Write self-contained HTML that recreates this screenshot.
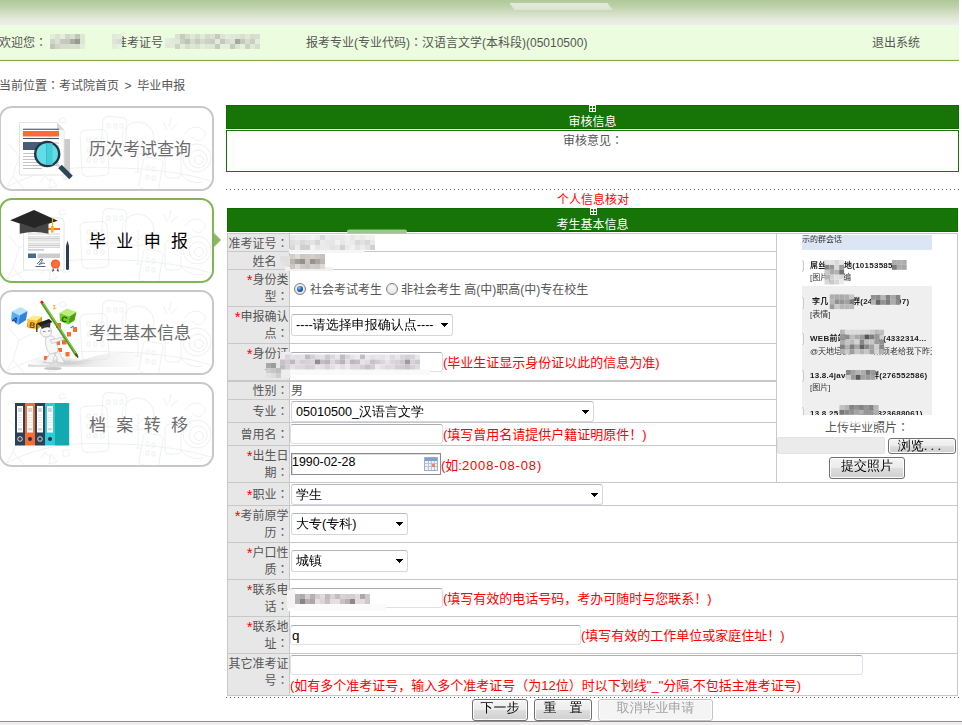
<!DOCTYPE html>
<html lang="zh-CN">
<head>
<meta charset="utf-8">
<title>毕业申报</title>
<style>
*{box-sizing:border-box;margin:0;padding:0}
html,body{width:962px;height:725px;overflow:hidden;background:#fff}
body{position:relative;font-family:"Liberation Sans","Noto Sans CJK SC","WenQuanYi Zen Hei",sans-serif;font-size:12px;color:#555;line-height:1}
.abs{position:absolute}
#banner{left:0;top:0;width:959px;height:25px;background:linear-gradient(to bottom,#b0c899 0%,#bdd1a9 25%,#cfddc1 50%,#e2e9da 76%,#eeeeed 100%)}
#streak{left:512px;top:3px;width:98px;height:7px;background:linear-gradient(to bottom,#e9ede0,#dfe6d3);transform:skewX(35deg);opacity:.9}
#info{left:0;top:25px;width:959px;height:36px;background:#ecfddf;border-bottom:1px solid #79b432;box-shadow:inset 0 -1px 0 #e0f5cf}
.t{position:absolute;white-space:nowrap;font-size:12px;line-height:14px;color:#555}
.blur{position:absolute;background:#ccc;filter:blur(1.5px);opacity:.8}
/* sidebar */
.sb{position:absolute;left:-1px;width:215px;height:85px;border:2px solid #c8c8c8;border-radius:13px;background:#fff;overflow:hidden}
.sb.on{border-color:#80b554}
.sb .lbl{position:absolute;left:88px;top:30px;font-size:17px;line-height:24px;color:#6c6c6c;white-space:nowrap}
.sb svg.doodle{position:absolute;left:0;top:0}
/* main */
.gh{position:absolute;left:226px;width:733px;height:24px;background:#177407;border:1px solid #0f6a03;color:#fff;text-align:center}
.gh .tt{position:absolute;left:0;right:0;top:9px;font-size:12px;line-height:14px}
.gh .ic{position:absolute;left:362px;top:-1px;width:7px;height:7px;border:1px solid #fff}
.gh .ic:before{content:"";position:absolute;left:2px;top:0;width:1px;height:5px;background:#fff}
.gh .ic:after{content:"";position:absolute;left:0;top:2px;width:5px;height:1px;background:#fff}
.dots{position:absolute;left:226px;width:733px;height:1px;background:repeating-linear-gradient(to right,#5c5c5c 0,#5c5c5c 1px,transparent 1px,transparent 4px)}
#tbl{position:absolute;left:227px;top:232px;width:731px;height:464px;border:1px solid #ccc;background:#fff}
.row{position:absolute;left:0;width:729px;border-top:1px solid #ccc}
.lab{position:absolute;left:0;top:0;bottom:0;width:62px;background:#efefef;border-right:1px solid #ccc;text-align:right;color:#555;font-size:12px;line-height:18px;padding-right:0}
.lab i{font-style:normal;color:#f00}
.red{color:#f00}
.lb{position:absolute;left:228px;width:60.5px;text-align:right;font-size:12px;line-height:17px;color:#555;white-space:nowrap}
.lb i{font-style:normal;color:#f00;font-size:15px;line-height:0;position:relative;top:1px}
.inp{position:absolute;background:#fff;border:1px solid #dde2ea;border-top-color:#abadb3;border-radius:3px;font-size:12px;color:#000}
.sel{position:absolute;background:#fff;border:1px solid #d3d7e0;border-top-color:#b4b7bd;border-radius:3px;font-size:13px;color:#000;white-space:nowrap;line-height:19px;padding-left:4px;font-family:"Liberation Sans","WenQuanYi Zen Hei","Noto Sans CJK SC",sans-serif}
.sel:after{content:"";position:absolute;right:4px;top:8px;width:7px;height:4px;background:linear-gradient(#000,#000) 0 0/7px 1px no-repeat,linear-gradient(#000,#000) 1px 1px/5px 1px no-repeat,linear-gradient(#000,#000) 2px 2px/3px 1px no-repeat,linear-gradient(#000,#000) 3px 3px/1px 1px no-repeat}
.sel b{font-weight:normal;font-size:12.6px}
.btn{position:absolute;border:1px solid #707070;border-radius:3px;background:linear-gradient(to bottom,#f4f4f4 0%,#ececec 48%,#dddddd 52%,#d0d0d0 100%);box-shadow:inset 0 0 0 1px #fcfcfc;color:#000;text-align:center;font-size:13px;white-space:nowrap;font-family:"Liberation Sans","WenQuanYi Zen Hei","Noto Sans CJK SC",sans-serif}

.radio{position:absolute;width:12px;height:12px;border-radius:50%;border:1px solid #808080;background:radial-gradient(circle at 50% 40%,#fdfdfd 0%,#e8e8e8 60%,#d4d4d4 100%)}
.radio.on:after{content:"";position:absolute;left:2px;top:2px;width:6px;height:6px;border-radius:50%;background:radial-gradient(circle at 38% 32%,#8fd0fa 0,#1b69b6 45%,#0a2f68 100%)}
.inp.dk{border:1px solid #8a8a8a;border-radius:0;box-shadow:inset 1px 1px 0 #ddd}
.btn.dis{color:#a2a2a2;border-color:#c2c4c6;background:#f4f4f4}

#photo .pt{position:absolute;white-space:pre;font-size:8px;line-height:10px;font-family:"Liberation Sans","Noto Sans CJK SC","WenQuanYi Zen Hei",sans-serif;filter:blur(.3px)}
#photo i{position:absolute;display:block;filter:blur(.6px)}
#mz i{position:absolute;display:block;filter:blur(.7px)}
</style>
</head>
<body>
<div id="banner" class="abs"></div>
<div id="streak" class="abs"></div>
<div id="info" class="abs"></div>
<div class="t" style="left:-1px;top:36px">欢迎您<span lang="zh-TW">：</span></div>
<div class="t" style="left:115px;top:36px">准考证号<span lang="zh-TW">：</span></div>
<div class="t" style="left:306px;top:36px">报考专业(专业代码)<span lang="zh-TW">：</span>汉语言文学(本科段)(05010500)</div>
<div class="t" style="left:872px;top:36px">退出系统</div>
<div class="t" style="left:-1px;top:79px">当前位置<span lang="zh-TW">：</span>考试院首页<span style="word-spacing:1.5px;letter-spacing:.5px"> &gt; </span>毕业申报</div>

<!-- SIDEBAR -->
<div class="sb" style="top:106px"><svg class="doodle" width="211" height="81" viewBox="0 0 211 81"><g fill="none" stroke="#eef0f2" stroke-width="1">
<rect x="80" y="22" width="27" height="46" rx="5" transform="rotate(-3 93 45)"/><rect x="101" y="9" width="24" height="34" rx="5" transform="rotate(4 113 26)"/>
<circle cx="137" cy="30" r="16"/><path d="M137 30v34M137 44l-7 -8M137 40l7 -7M134 64h7"/>
<rect x="140" y="50" width="20" height="32" rx="4" transform="rotate(10 150 66)"/><rect x="164" y="40" width="16" height="30" rx="4"/>
<path d="M4 80C40 60,80 58,110 60C150 60,190 66,212 74"/>
<path d="M8 36l10 12l-6 20M18 48l12 -6M12 68l-8 14M12 68l12 14M22 30c4 -4,8 -2,7 2s-6 4,-7 -2z"/>
<circle cx="196" cy="50" r="14"/><circle cx="197" cy="51" r="9"/><circle cx="198" cy="52" r="4.500"/><path d="M184 26c4 -10,20 -8,20 0s-10 8,-13 3M180 66c4 6,12 10,22 8"/>
<path d="M86 30h3v4h-3zM93 30h3v4h-3zM100 30h3v4h-3zM86 40h3v4h-3zM93 40h3v4h-3zM100 40h3v4h-3zM86 50h3v4h-3zM93 50h3v4h-3zM100 50h3v4h-3zM106 16h3v4h-3zM113 16h3v4h-3zM119 16h3v4h-3zM145 58h3v4h-3zM151 59h3v4h-3zM145 67h3v4h-3zM151 68h3v4h-3z"/>
<path d="M50 70l6 8l-8 2zM62 66h6v6h-6zM40 74l4 -6l5 5"/><path d="M58 12c3 -4,8 -2,7 2l-6 1zM162 14l4 8M170 10l-2 9M176 16l-6 6"/>
</g></svg><div class="lbl" style="">历次考试查询</div></div>
<svg class="abs" style="left:0;top:106px" width="120" height="85" viewBox="0 106 120 85"><rect x="62" y="139" width="8" height="33" fill="#cbcbcb"/>
<path d="M19.5 122.5H57L64 130V175H19.5Z" fill="#fff" stroke="#e4e4e4" stroke-width="1"/>
<path d="M57 122.5L64 130H57Z" fill="#dadada"/>
<rect x="23" y="128.7" width="36" height="1.1" fill="#41566b"/>
<rect x="23" y="131" width="36" height="5.5" fill="#ff6b35"/>
<rect x="23" y="138" width="36" height="1" fill="#41566b"/>
<rect x="23" y="142" width="18" height="8" fill="#4b5d74"/>
<path d="M43 143h16M43 146h16M43 149h16M23 153.500h36M23 156.500h36M23 159.500h36M23 162.500h36M23 165.500h36M23 168.500h19" stroke="#c4c4c4" stroke-width="1.2"/>
<path d="M56 163L60 167" stroke="#d0d0d0" stroke-width="2"/>
<path d="M60 166.500L71 177.500" stroke="#2e4459" stroke-width="5" stroke-linecap="butt"/>
<circle cx="47.200" cy="154" r="12" fill="#62dde6" stroke="#263447" stroke-width="2.400"/>
<rect x="46.500" y="143.200" width="6" height="21.600" fill="#45cdd8"/>
<rect x="46" y="143" width="0.8" height="22" fill="#2fb9c6"/></svg>
<div class="sb on" style="top:198px"><svg class="doodle" width="211" height="81" viewBox="0 0 211 81"><g fill="none" stroke="#eef0f2" stroke-width="1">
<rect x="80" y="22" width="27" height="46" rx="5" transform="rotate(-3 93 45)"/><rect x="101" y="9" width="24" height="34" rx="5" transform="rotate(4 113 26)"/>
<circle cx="137" cy="30" r="16"/><path d="M137 30v34M137 44l-7 -8M137 40l7 -7M134 64h7"/>
<rect x="140" y="50" width="20" height="32" rx="4" transform="rotate(10 150 66)"/><rect x="164" y="40" width="16" height="30" rx="4"/>
<path d="M4 80C40 60,80 58,110 60C150 60,190 66,212 74"/>
<path d="M8 36l10 12l-6 20M18 48l12 -6M12 68l-8 14M12 68l12 14M22 30c4 -4,8 -2,7 2s-6 4,-7 -2z"/>
<circle cx="196" cy="50" r="14"/><circle cx="197" cy="51" r="9"/><circle cx="198" cy="52" r="4.500"/><path d="M184 26c4 -10,20 -8,20 0s-10 8,-13 3M180 66c4 6,12 10,22 8"/>
<path d="M86 30h3v4h-3zM93 30h3v4h-3zM100 30h3v4h-3zM86 40h3v4h-3zM93 40h3v4h-3zM100 40h3v4h-3zM86 50h3v4h-3zM93 50h3v4h-3zM100 50h3v4h-3zM106 16h3v4h-3zM113 16h3v4h-3zM119 16h3v4h-3zM145 58h3v4h-3zM151 59h3v4h-3zM145 67h3v4h-3zM151 68h3v4h-3z"/>
<path d="M50 70l6 8l-8 2zM62 66h6v6h-6zM40 74l4 -6l5 5"/><path d="M58 12c3 -4,8 -2,7 2l-6 1zM162 14l4 8M170 10l-2 9M176 16l-6 6"/>
</g></svg><div class="lbl" style="color:#000;letter-spacing:2.8px">毕 业 申 报</div></div>
<svg class="abs" style="left:0;top:198px" width="120" height="85" viewBox="0 198 120 85"><path d="M23.500 218H60Q64 218 64 222V270H23.500Z" fill="#fff" stroke="#e6e6e6" stroke-width="1"/>
<rect x="48" y="228" width="12" height="2" fill="#ff6b35"/>
<path d="M28 234h32M28 236.800h32M28 240.800h32M28 243.200h32M28 247.400h32" stroke="#d4d4d4" stroke-width="1"/>
<path d="M28 238.700h32M28 245.300h32" stroke="#cfcfcf" stroke-width="1.800"/>
<path d="M28 249.800h16" stroke="#cfcfcf" stroke-width="1.800"/>
<rect x="28" y="253.500" width="8" height="4.500" fill="#4b6a88"/>
<rect x="37.500" y="253.500" width="22.500" height="4.500" fill="#cdcdcd"/>
<path d="M37 264l3 -3l1 -2l1.500 .5l-1 2.500l-2.500 2.500l4 -1.500l2 .5M35.500 266.500h10" stroke="#54697f" stroke-width="1" fill="none"/>
<path d="M53 267l-.8 5l2 -1.200zM58 267l.8 5l-2 -1.200z" fill="#35506b"/>
<circle cx="55.500" cy="264" r="4.600" fill="#ff5a26"/>
<circle cx="55.500" cy="264" r="3" fill="#ff7240"/>
<path d="M67.500 240.500L69 246V268.500Q69 270 67.500 270Q66 270 66 268.500V246Z" fill="#2b3d50"/>
<path d="M10.200 220.300L34 210L57.800 220.800L34 228.500Z" fill="#262626"/>
<path d="M19.700 223L34 228L48.500 223V233.800Q34 230 19.700 233.800Z" fill="#454545"/>

<path d="M52.500 218V228" stroke="#f5b400" stroke-width="1.200"/>
<path d="M52.300 226V232.500" stroke="#f9b700" stroke-width="2.600"/></svg>
<div class="sb" style="top:290px"><svg class="doodle" width="211" height="81" viewBox="0 0 211 81"><g fill="none" stroke="#eef0f2" stroke-width="1">
<rect x="80" y="22" width="27" height="46" rx="5" transform="rotate(-3 93 45)"/><rect x="101" y="9" width="24" height="34" rx="5" transform="rotate(4 113 26)"/>
<circle cx="137" cy="30" r="16"/><path d="M137 30v34M137 44l-7 -8M137 40l7 -7M134 64h7"/>
<rect x="140" y="50" width="20" height="32" rx="4" transform="rotate(10 150 66)"/><rect x="164" y="40" width="16" height="30" rx="4"/>
<path d="M4 80C40 60,80 58,110 60C150 60,190 66,212 74"/>
<path d="M8 36l10 12l-6 20M18 48l12 -6M12 68l-8 14M12 68l12 14M22 30c4 -4,8 -2,7 2s-6 4,-7 -2z"/>
<circle cx="196" cy="50" r="14"/><circle cx="197" cy="51" r="9"/><circle cx="198" cy="52" r="4.500"/><path d="M184 26c4 -10,20 -8,20 0s-10 8,-13 3M180 66c4 6,12 10,22 8"/>
<path d="M86 30h3v4h-3zM93 30h3v4h-3zM100 30h3v4h-3zM86 40h3v4h-3zM93 40h3v4h-3zM100 40h3v4h-3zM86 50h3v4h-3zM93 50h3v4h-3zM100 50h3v4h-3zM106 16h3v4h-3zM113 16h3v4h-3zM119 16h3v4h-3zM145 58h3v4h-3zM151 59h3v4h-3zM145 67h3v4h-3zM151 68h3v4h-3z"/>
<path d="M50 70l6 8l-8 2zM62 66h6v6h-6zM40 74l4 -6l5 5"/><path d="M58 12c3 -4,8 -2,7 2l-6 1zM162 14l4 8M170 10l-2 9M176 16l-6 6"/>
</g></svg><div class="lbl" style="">考生基本信息</div></div>
<svg class="abs" style="left:0;top:290px" width="160" height="83" viewBox="0 290 160 83"><defs><linearGradient id="sw" x1="0" y1="0" x2="1" y2="0"><stop offset="0" stop-color="#cfcfcf" stop-opacity=".7"/><stop offset=".45" stop-color="#d8d8d8" stop-opacity=".6"/><stop offset="1" stop-color="#e8e8e8" stop-opacity="0"/></linearGradient><radialGradient id="sh" cx="50%" cy="50%" r="50%"><stop offset="0" stop-color="#9a9a9a" stop-opacity=".55"/><stop offset="1" stop-color="#bbb" stop-opacity="0"/></radialGradient></defs>
<path d="M28 364C50 367,76 363,92 357C106 352,125 351,150 352V367H28Z" fill="url(#sw)"/>
<ellipse cx="62" cy="362" rx="34" ry="5" fill="url(#sh)"/>
<ellipse cx="53" cy="368.500" rx="9" ry="1.600" fill="#c8c8c8"/>
<g fill="#ff6a2e"><rect x="56" y="323" width="5" height="5"/><rect x="73" y="327" width="4" height="5"/><rect x="67" y="332" width="4" height="4.500"/><rect x="62" y="340" width="4.500" height="4.500"/><rect x="56" y="341" width="4" height="4"/><rect x="58" y="348" width="4" height="4"/><rect x="65.500" y="352" width="4" height="4.500"/><rect x="44" y="356" width="3.500" height="4"/><rect x="27" y="323" width="3" height="4"/></g>
<path d="M12 311.500L20.500 307L27.500 311L19.500 315.500Z" fill="#b4e1fc"/><path d="M12 311.500L19.500 315.500L18.500 325L11 319.500Z" fill="#58aff0"/><path d="M19.500 315.500L27.500 311L26 320L18.500 325Z" fill="#2f86d6"/>
<text x="12.500" y="322.500" font-family="Liberation Sans,sans-serif" font-weight="700" font-size="8" fill="#14308c" transform="rotate(28 15 319)">A</text>
<path d="M27 319L33 315.500L42 316.500L37 320.500Z" fill="#fdeb93"/><path d="M27 319L37 320.500L37 329.500L28 328Z" fill="#f6c33c"/><path d="M37 320.500L42 316.500L42 326L37 329.500Z" fill="#e0a21e"/>
<text x="29.500" y="328" font-family="Liberation Sans,sans-serif" font-weight="700" font-size="8" fill="#7c3f0c" transform="rotate(8 32 325)">B</text>
<path d="M59.500 313L67 308.500L76.500 312L69.500 316.500Z" fill="#baf076"/><path d="M59.500 313L69.500 316.500L68 324.500L60 321Z" fill="#72cc2c"/><path d="M69.500 316.500L76.500 312L74.500 320.500L68 324.500Z" fill="#4da012"/>
<text x="61.500" y="322" font-family="Liberation Sans,sans-serif" font-weight="700" font-size="8" fill="#174f06" transform="rotate(18 64 319)">C</text>
<text x="52.500" y="309" font-family="Liberation Sans,sans-serif" font-weight="700" font-size="6" fill="#f5a623" transform="rotate(-15 55 306)">2</text>
<path d="M70.500 328l3 -2" stroke="#3f86e0" stroke-width="1.500"/>
<path d="M50 352C48 358,46 360,44 362.500L53 363C53 358,55 356,56 353ZM53 352C56 356,58 358,57 362.500L65 363C62 358,60 354,58 350Z" fill="#f4f4f4" stroke="#c2c2c2" stroke-width=".7"/>
<path d="M46.500 336C44 342,46 350,50 354L58 352C58 346,56 340,53 336Z" fill="#f7f7f7" stroke="#c2c2c2" stroke-width=".7"/>
<path d="M50 340L63 337L64 339.500L52 343.500Z" fill="#f4f4f4" stroke="#c2c2c2" stroke-width=".7"/>
<circle cx="46" cy="331.500" r="5.600" fill="#f6f6f6" stroke="#bcbcbc" stroke-width=".8"/>
<path d="M43 331.500h2.500M48 331h2.500" stroke="#8a8a8a" stroke-width="1"/>
<path d="M36.500 323.500L49 319L52.500 322L41 326.500Z" fill="#1e1e1e"/><path d="M40.500 326L50.500 322.500L50 327.500Q45 326.500 42 329Z" fill="#333"/>
<path d="M36.800 324V332" stroke="#222" stroke-width="1.200"/>
<path d="M42 302.500L77 356" stroke="#4f9a1a" stroke-width="3"/><path d="M42.500 302.200L77.500 355.700" stroke="#8fd548" stroke-width="1"/>
<circle cx="41.800" cy="302.200" r="1.400" fill="#e02020"/>
<path d="M75.500 353.500L78 357.500" stroke="#5a3a1a" stroke-width="1.500"/></svg>
<div class="sb" style="top:382px"><svg class="doodle" width="211" height="81" viewBox="0 0 211 81"><g fill="none" stroke="#eef0f2" stroke-width="1">
<rect x="80" y="22" width="27" height="46" rx="5" transform="rotate(-3 93 45)"/><rect x="101" y="9" width="24" height="34" rx="5" transform="rotate(4 113 26)"/>
<circle cx="137" cy="30" r="16"/><path d="M137 30v34M137 44l-7 -8M137 40l7 -7M134 64h7"/>
<rect x="140" y="50" width="20" height="32" rx="4" transform="rotate(10 150 66)"/><rect x="164" y="40" width="16" height="30" rx="4"/>
<path d="M4 80C40 60,80 58,110 60C150 60,190 66,212 74"/>
<path d="M8 36l10 12l-6 20M18 48l12 -6M12 68l-8 14M12 68l12 14M22 30c4 -4,8 -2,7 2s-6 4,-7 -2z"/>
<circle cx="196" cy="50" r="14"/><circle cx="197" cy="51" r="9"/><circle cx="198" cy="52" r="4.500"/><path d="M184 26c4 -10,20 -8,20 0s-10 8,-13 3M180 66c4 6,12 10,22 8"/>
<path d="M86 30h3v4h-3zM93 30h3v4h-3zM100 30h3v4h-3zM86 40h3v4h-3zM93 40h3v4h-3zM100 40h3v4h-3zM86 50h3v4h-3zM93 50h3v4h-3zM100 50h3v4h-3zM106 16h3v4h-3zM113 16h3v4h-3zM119 16h3v4h-3zM145 58h3v4h-3zM151 59h3v4h-3zM145 67h3v4h-3zM151 68h3v4h-3z"/>
<path d="M50 70l6 8l-8 2zM62 66h6v6h-6zM40 74l4 -6l5 5"/><path d="M58 12c3 -4,8 -2,7 2l-6 1zM162 14l4 8M170 10l-2 9M176 16l-6 6"/>
</g></svg><div class="lbl" style="letter-spacing:2.8px">档 案 转 移</div></div>
<svg class="abs" style="left:0;top:382px" width="120" height="85" viewBox="0 382 120 85"><rect x="15" y="403" width="10" height="42.500" fill="#2b4156"/><rect x="25" y="403" width="10" height="42.500" fill="#f76b35"/><rect x="35" y="403" width="10" height="42.500" fill="#2b4156"/><rect x="45" y="403" width="10" height="42.500" fill="#2dcbd6"/><rect x="55" y="403" width="14.200" height="42.500" fill="#12a9b0"/>
<g fill="#fff"><rect x="17" y="406" width="6" height="26.500"/><rect x="27" y="406" width="6" height="26.500"/><rect x="37" y="406" width="6" height="26.500"/><rect x="47" y="406" width="6" height="26.500"/></g>
<g fill="#d4d4d4"><rect x="18" y="408" width="4" height="4"/><rect x="28" y="408" width="4" height="4"/><rect x="38" y="408" width="4" height="4"/><rect x="48" y="408" width="4" height="4"/><rect x="18" y="428" width="4" height="2.500"/><rect x="28" y="428" width="4" height="2.500"/><rect x="38" y="428" width="4" height="2.500"/><rect x="48" y="428" width="4" height="2.500"/></g>
<path d="M18 415h4M18 417.500h4M18 420h4M18 422.500h4M18 425h4M28 415h4M28 417.500h4M28 420h4M28 422.500h4M28 425h4M38 415h4M38 417.500h4M38 420h4M38 422.500h4M38 425h4M48 415h4M48 417.500h4M48 420h4M48 422.500h4M48 425h4" stroke="#e2e2e2" stroke-width="1"/>
<circle cx="20" cy="439" r="2.300" fill="#2b4156" stroke="#fff" stroke-width=".8"/><circle cx="30" cy="439" r="2" fill="#1f3247"/><circle cx="40" cy="439" r="2.300" fill="#2b4156" stroke="#fff" stroke-width=".8"/><circle cx="50" cy="439" r="2" fill="#1f3247"/></svg>
<div class="abs" style="left:214px;top:233px;width:0;height:0;border:7px solid transparent;border-left:7px solid #8cb866;border-right:0"></div>

<!-- MAIN -->
<div class="gh" style="top:105px"><span class="ic"></span><div class="tt">审核信息</div></div>
<div class="abs" style="left:226px;top:130px;width:733px;height:42px;border:1px solid #187208;background:#fff"></div>
<div class="t" style="left:563px;top:134px">审核意见<span lang="zh-TW">：</span></div>
<div class="dots" style="top:189px"></div>
<div class="t red" style="left:557px;top:193px">个人信息核对</div>
<div class="gh" style="top:208px;left:227px;width:731px"><span class="ic"></span><div class="tt">考生基本信息</div></div>

<div class="abs" style="left:227px;top:233px;width:63px;height:463px;background:#e7e7e7;border-left:1px solid #c8c8c8;border-right:1px solid #c8c8c8"></div>
<div class="abs" style="left:957px;top:233px;width:1px;height:463px;background:#c8c8c8"></div>
<div class="abs" style="left:776px;top:233px;width:1px;height:249px;background:#c8c8c8"></div>
<div class="abs" style="left:227px;top:233px;width:731px;height:1px;background:#c8c8c8"></div>
<div class="abs" style="left:227px;top:251px;width:550px;height:1px;background:#c8c8c8"></div>
<div class="abs" style="left:227px;top:269px;width:550px;height:1px;background:#c8c8c8"></div>
<div class="abs" style="left:227px;top:306px;width:550px;height:1px;background:#c8c8c8"></div>
<div class="abs" style="left:227px;top:343px;width:550px;height:1px;background:#c8c8c8"></div>
<div class="abs" style="left:227px;top:380px;width:550px;height:2px;background:#c8c8c8"></div>
<div class="abs" style="left:227px;top:399px;width:550px;height:1px;background:#c8c8c8"></div>
<div class="abs" style="left:227px;top:422px;width:550px;height:1px;background:#c8c8c8"></div>
<div class="abs" style="left:227px;top:445px;width:550px;height:1px;background:#c8c8c8"></div>
<div class="abs" style="left:227px;top:482px;width:731px;height:1px;background:#c8c8c8"></div>
<div class="abs" style="left:227px;top:505px;width:731px;height:1px;background:#c8c8c8"></div>
<div class="abs" style="left:227px;top:542px;width:731px;height:1px;background:#c8c8c8"></div>
<div class="abs" style="left:227px;top:579px;width:731px;height:1px;background:#c8c8c8"></div>
<div class="abs" style="left:227px;top:616px;width:731px;height:1px;background:#c8c8c8"></div>
<div class="abs" style="left:227px;top:653px;width:731px;height:1px;background:#c8c8c8"></div>
<div class="abs" style="left:227px;top:695px;width:731px;height:1px;background:#c8c8c8"></div>
<div class="lb" style="top:236px">准考证号<span lang="zh-TW">：</span></div>
<div class="lb" style="top:254px">姓名<span lang="zh-TW">：</span></div>
<div class="lb" style="top:272px"><i>*</i>身份类<br>型<span lang="zh-TW">：</span></div>
<div class="lb" style="top:309px"><i>*</i>申报确认<br>点<span lang="zh-TW">：</span></div>
<div class="lb" style="top:346px"><i>*</i>身份证<br>号<span lang="zh-TW">：</span></div>
<div class="lb" style="top:383px">性别<span lang="zh-TW">：</span></div>
<div class="lb" style="top:404px">专业<span lang="zh-TW">：</span></div>
<div class="lb" style="top:427px">曾用名<span lang="zh-TW">：</span></div>
<div class="lb" style="top:448px"><i>*</i>出生日<br>期<span lang="zh-TW">：</span></div>
<div class="lb" style="top:487px"><i>*</i>职业<span lang="zh-TW">：</span></div>
<div class="lb" style="top:508px"><i>*</i>考前原学<br>历<span lang="zh-TW">：</span></div>
<div class="lb" style="top:545px"><i>*</i>户口性<br>质<span lang="zh-TW">：</span></div>
<div class="lb" style="top:582px"><i>*</i>联系电<br>话<span lang="zh-TW">：</span></div>
<div class="lb" style="top:619px"><i>*</i>联系地<br>址<span lang="zh-TW">：</span></div>
<div class="lb" style="top:656px">其它准考证<br>号<span lang="zh-TW">：</span></div>

<!-- values -->
<div class="t" style="left:291px;top:383px;line-height:16px">男</div>
<!-- radios -->
<div class="radio on" style="left:294px;top:283px"></div>
<div class="t" style="left:310px;top:283px">社会考试考生</div>
<div class="radio" style="left:386px;top:283px"></div>
<div class="t" style="left:401px;top:283px">非社会考生 高(中)职高(中)专在校生</div>
<!-- selects / inputs -->
<div class="sel" style="left:291px;top:314px;width:162px;height:22px"><b>----</b>请选择申报确认点<b>----</b></div>
<div class="inp" style="left:290px;top:352px;width:153px;height:20px"></div>
<div class="t red" style="left:443px;top:355px;font-size:13px;line-height:16px">(毕业生证显示身份证以此的信息为准)</div>
<div class="sel" style="left:291px;top:401px;width:303px;height:21px"><b>05010500_</b>汉语言文学</div>
<div class="inp" style="left:290px;top:424px;width:153px;height:20px"></div>
<div class="t red" style="left:443px;top:427px;font-size:13px;line-height:16px">(填写曾用名请提供户籍证明原件！)</div>
<div class="inp dk" style="left:291px;top:453px;width:150px;height:22px"><span style="position:absolute;left:0;top:1px;font-size:12.4px;line-height:15px;color:#000;font-family:'Liberation Sans',sans-serif">1990-02-28</span>
<svg style="position:absolute;left:132px;top:3px" width="14" height="14" viewBox="0 0 14 14"><rect x="0.5" y="0.5" width="13" height="13" fill="#eef2f8" stroke="#9fb0c8"/><rect x="1" y="1" width="12" height="3" fill="#7f9fd0"/><path d="M1 6.5h12M1 9.5h12M4.5 4v9M7.5 4v9M10.5 4v9" stroke="#b7c3d6" stroke-width="1"/><rect x="8" y="7" width="3" height="3" fill="#e8866a"/></svg></div>
<div class="t red" style="left:441px;top:458px;font-size:13px;line-height:16px">(如:<span style="letter-spacing:.85px">2008-08-08</span>)</div>
<div class="sel" style="left:291px;top:484px;width:312px;height:21px">学生</div>
<div class="sel" style="left:291px;top:513px;width:117px;height:22px">大专<b>(</b>专科<b>)</b></div>
<div class="sel" style="left:291px;top:550px;width:117px;height:22px">城镇</div>
<div class="inp" style="left:290px;top:588px;width:153px;height:20px"></div>
<div class="t red" style="left:443px;top:591px;font-size:13px;line-height:16px">(填写有效的电话号码，考办可随时与您联系！)</div>
<div class="inp" style="left:290px;top:625px;width:291px;height:20px"><span style="position:absolute;left:1px;top:2px;font-size:13.33px;line-height:15px;color:#000;font-family:'Liberation Sans',sans-serif">q</span></div>
<div class="t red" style="left:581px;top:628px;font-size:13px;line-height:16px">(填写有效的工作单位或家庭住址！)</div>
<div class="inp" style="left:290px;top:655px;width:573px;height:20px"></div>
<div class="t red" style="left:290px;top:678px;font-size:13px;line-height:16px">(如有多个准考证号，输入多个准考证号（为12位）时以下划线"_"分隔,不包括主准考证号)</div>
<!-- photo cell -->
<div class="abs" id="photo" style="left:802px;top:235px;width:130px;height:180px;background:#efefef;overflow:hidden"><div style="position:absolute;left:0;top:0;width:130px;height:15px;background:#dbe5f3"></div><div style="position:absolute;left:0;top:15px;width:130px;height:36px;background:#fff"></div><span class="pt" style="left:0px;top:0px;color:#333">示的群会话</span><span class="pt" style="left:8px;top:25.5px;font-weight:bold;letter-spacing:.25px;color:#1a1a1a">屌丝</span><span class="pt" style="left:42px;top:25.5px;font-weight:bold;letter-spacing:.25px;color:#1a1a1a">地(10153585</span><span class="pt" style="left:8px;top:37.5px;color:#333">[图片]</span><span class="pt" style="left:41px;top:37.5px;color:#333">编</span><span class="pt" style="left:10px;top:62px;font-weight:bold;letter-spacing:.25px;color:#1a1a1a">李几</span><span class="pt" style="left:50px;top:62px;font-weight:bold;letter-spacing:.25px;color:#1a1a1a">群(24</span><span class="pt" style="left:95px;top:62px;font-weight:bold;letter-spacing:.25px;color:#1a1a1a">97)</span><span class="pt" style="left:8px;top:74.5px;color:#333">[表情]</span><span class="pt" style="left:8px;top:99px;font-weight:bold;letter-spacing:.25px;color:#1a1a1a">WEB前端</span><span class="pt" style="left:73px;top:99px;font-weight:bold;letter-spacing:.25px;color:#1a1a1a">班(4332314...</span><span class="pt" style="left:8px;top:111.5px;color:#333">@天地培训</span><span class="pt" style="left:72px;top:111.5px;color:#333">麻烦老给我下昨天</span><span class="pt" style="left:8px;top:136px;font-weight:bold;letter-spacing:.25px;color:#1a1a1a">13.8.4java</span><span class="pt" style="left:69px;top:136px;font-weight:bold;letter-spacing:.25px;color:#1a1a1a">群(276552586)</span><span class="pt" style="left:8px;top:148px;color:#333">[图片]</span><span class="pt" style="left:8px;top:173.5px;font-weight:bold;letter-spacing:.25px;color:#1a1a1a">13.8.25</span><span class="pt" style="left:56px;top:173.5px;font-weight:bold;letter-spacing:.25px;color:#1a1a1a">业班(323688061)</span><div style="position:absolute;left:-4px;top:25px;width:6px;height:12px;border:1px solid #ccc;border-radius:2px;background:#f8f8f8"></div><div style="position:absolute;left:-4px;top:62px;width:6px;height:12px;border:1px solid #ccc;border-radius:2px;background:#f8f8f8"></div><div style="position:absolute;left:-4px;top:98px;width:6px;height:12px;border:1px solid #ccc;border-radius:2px;background:#f8f8f8"></div><div style="position:absolute;left:-4px;top:135px;width:6px;height:12px;border:1px solid #ccc;border-radius:2px;background:#f8f8f8"></div><div style="position:absolute;left:-4px;top:172px;width:6px;height:12px;border:1px solid #ccc;border-radius:2px;background:#f8f8f8"></div><svg style="position:absolute;left:0;top:0;filter:blur(.6px)" width="130" height="180" viewBox="0 0 130 180"><rect x="22.5" y="25" width="4.9" height="4.9" fill="#e3e3e3"/><rect x="27.4" y="25" width="4.9" height="4.9" fill="#e4e4e4"/><rect x="32.3" y="25" width="4.9" height="4.9" fill="#d7d7d7"/><rect x="37.2" y="25" width="4.9" height="4.9" fill="#e7e7e7"/><rect x="22.5" y="29.9" width="4.9" height="4.9" fill="#858585"/><rect x="27.4" y="29.9" width="4.9" height="4.9" fill="#949494"/><rect x="32.3" y="29.9" width="4.9" height="4.9" fill="#dadada"/><rect x="37.2" y="29.9" width="4.9" height="4.9" fill="#9b9b9b"/><rect x="22.5" y="34.8" width="4.9" height="4.9" fill="#c8c8c8"/><rect x="27.4" y="34.8" width="4.9" height="4.9" fill="#aaaaaa"/><rect x="32.3" y="34.8" width="4.9" height="4.9" fill="#b1b1b1"/><rect x="37.2" y="34.8" width="4.9" height="4.9" fill="#737373"/><rect x="22.5" y="39.7" width="4.9" height="4.9" fill="#b4b4b4"/><rect x="27.4" y="39.7" width="4.9" height="4.9" fill="#d1d1d1"/><rect x="32.3" y="39.7" width="4.9" height="4.9" fill="#e1e1e1"/><rect x="37.2" y="39.7" width="4.9" height="4.9" fill="#d8d8d8"/><rect x="22.5" y="44.6" width="4.9" height="4.9" fill="#d8d8d8"/><rect x="27.4" y="44.6" width="4.9" height="4.9" fill="#c9c9c9"/><rect x="32.3" y="44.6" width="4.9" height="4.9" fill="#d7d7d7"/><rect x="37.2" y="44.6" width="4.9" height="4.9" fill="#eaeaea"/><rect x="90" y="25" width="4.9" height="4.9" fill="#adadad"/><rect x="94.9" y="25" width="4.9" height="4.9" fill="#b0b0b0"/><rect x="99.8" y="25" width="4.9" height="4.9" fill="#aeaeae"/><rect x="90" y="29.9" width="4.9" height="4.9" fill="#7d7d7d"/><rect x="94.9" y="29.9" width="4.9" height="4.9" fill="#a9a9a9"/><rect x="99.8" y="29.9" width="4.9" height="4.9" fill="#a6a6a6"/><rect x="27.7" y="59.4" width="4.9" height="4.9" fill="#afafaf"/><rect x="32.6" y="59.4" width="4.9" height="4.9" fill="#ababab"/><rect x="37.5" y="59.4" width="4.9" height="4.9" fill="#aaaaaa"/><rect x="42.4" y="59.4" width="4.9" height="4.9" fill="#aeaeae"/><rect x="47.3" y="59.4" width="4.9" height="4.9" fill="#c6c6c6"/><rect x="27.7" y="64.3" width="4.9" height="4.9" fill="#b6b6b6"/><rect x="32.6" y="64.3" width="4.9" height="4.9" fill="#909090"/><rect x="37.5" y="64.3" width="4.9" height="4.9" fill="#959595"/><rect x="42.4" y="64.3" width="4.9" height="4.9" fill="#a2a2a2"/><rect x="47.3" y="64.3" width="4.9" height="4.9" fill="#7d7d7d"/><rect x="27.7" y="69.2" width="4.9" height="4.9" fill="#9b9b9b"/><rect x="32.6" y="69.2" width="4.9" height="4.9" fill="#cbcbcb"/><rect x="37.5" y="69.2" width="4.9" height="4.9" fill="#b6b6b6"/><rect x="42.4" y="69.2" width="4.9" height="4.9" fill="#b7b7b7"/><rect x="47.3" y="69.2" width="4.9" height="4.9" fill="#b7b7b7"/><rect x="68.9" y="60" width="4.9" height="4.9" fill="#929292"/><rect x="73.8" y="60" width="4.9" height="4.9" fill="#8b8b8b"/><rect x="78.7" y="60" width="4.9" height="4.9" fill="#b7b7b7"/><rect x="83.6" y="60" width="4.9" height="4.9" fill="#828282"/><rect x="88.5" y="60" width="4.9" height="4.9" fill="#a8a8a8"/><rect x="93.4" y="60" width="4.9" height="4.9" fill="#848484"/><rect x="68.9" y="64.9" width="4.9" height="4.9" fill="#b4b4b4"/><rect x="73.8" y="64.9" width="4.9" height="4.9" fill="#666666"/><rect x="78.7" y="64.9" width="4.9" height="4.9" fill="#949494"/><rect x="83.6" y="64.9" width="4.9" height="4.9" fill="#7b7b7b"/><rect x="88.5" y="64.9" width="4.9" height="4.9" fill="#acacac"/><rect x="93.4" y="64.9" width="4.9" height="4.9" fill="#8b8b8b"/><rect x="38" y="94.7" width="4.9" height="4.9" fill="#b6b6b6"/><rect x="42.9" y="94.7" width="4.9" height="4.9" fill="#dcdcdc"/><rect x="47.8" y="94.7" width="4.9" height="4.9" fill="#dadada"/><rect x="52.7" y="94.7" width="4.9" height="4.9" fill="#dbdbdb"/><rect x="57.6" y="94.7" width="4.9" height="4.9" fill="#d9d9d9"/><rect x="62.5" y="94.7" width="4.9" height="4.9" fill="#d8d8d8"/><rect x="67.4" y="94.7" width="4.9" height="4.9" fill="#cbcbcb"/><rect x="72.3" y="94.7" width="4.9" height="4.9" fill="#bababa"/><rect x="77.2" y="94.7" width="4.9" height="4.9" fill="#c0c0c0"/><rect x="38" y="99.6" width="4.9" height="4.9" fill="#979797"/><rect x="42.9" y="99.6" width="4.9" height="4.9" fill="#8c8c8c"/><rect x="47.8" y="99.6" width="4.9" height="4.9" fill="#bebebe"/><rect x="52.7" y="99.6" width="4.9" height="4.9" fill="#a9a9a9"/><rect x="57.6" y="99.6" width="4.9" height="4.9" fill="#9d9d9d"/><rect x="62.5" y="99.6" width="4.9" height="4.9" fill="#565656"/><rect x="67.4" y="99.6" width="4.9" height="4.9" fill="#7c7c7c"/><rect x="72.3" y="99.6" width="4.9" height="4.9" fill="#989898"/><rect x="77.2" y="99.6" width="4.9" height="4.9" fill="#d2d2d2"/><rect x="38" y="104.5" width="4.9" height="4.9" fill="#adadad"/><rect x="42.9" y="104.5" width="4.9" height="4.9" fill="#c4c4c4"/><rect x="47.8" y="104.5" width="4.9" height="4.9" fill="#bababa"/><rect x="52.7" y="104.5" width="4.9" height="4.9" fill="#d4d4d4"/><rect x="57.6" y="104.5" width="4.9" height="4.9" fill="#888888"/><rect x="62.5" y="104.5" width="4.9" height="4.9" fill="#bfbfbf"/><rect x="67.4" y="104.5" width="4.9" height="4.9" fill="#c6c6c6"/><rect x="72.3" y="104.5" width="4.9" height="4.9" fill="#9b9b9b"/><rect x="77.2" y="104.5" width="4.9" height="4.9" fill="#929292"/><rect x="38" y="109.4" width="4.9" height="4.9" fill="#808080"/><rect x="42.9" y="109.4" width="4.9" height="4.9" fill="#b1b1b1"/><rect x="47.8" y="109.4" width="4.9" height="4.9" fill="#7d7d7d"/><rect x="52.7" y="109.4" width="4.9" height="4.9" fill="#a7a7a7"/><rect x="57.6" y="109.4" width="4.9" height="4.9" fill="#606060"/><rect x="62.5" y="109.4" width="4.9" height="4.9" fill="#898989"/><rect x="67.4" y="109.4" width="4.9" height="4.9" fill="#a2a2a2"/><rect x="72.3" y="109.4" width="4.9" height="4.9" fill="#d0d0d0"/><rect x="77.2" y="109.4" width="4.9" height="4.9" fill="#898989"/><rect x="38" y="114.3" width="4.9" height="4.9" fill="#b1b1b1"/><rect x="42.9" y="114.3" width="4.9" height="4.9" fill="#c9c9c9"/><rect x="47.8" y="114.3" width="4.9" height="4.9" fill="#9d9d9d"/><rect x="52.7" y="114.3" width="4.9" height="4.9" fill="#c6c6c6"/><rect x="57.6" y="114.3" width="4.9" height="4.9" fill="#b4b4b4"/><rect x="62.5" y="114.3" width="4.9" height="4.9" fill="#c6c6c6"/><rect x="67.4" y="114.3" width="4.9" height="4.9" fill="#9f9f9f"/><rect x="72.3" y="114.3" width="4.9" height="4.9" fill="#d6d6d6"/><rect x="77.2" y="114.3" width="4.9" height="4.9" fill="#b3b3b3"/><rect x="44" y="135" width="4.9" height="4.9" fill="#888888"/><rect x="48.9" y="135" width="4.9" height="4.9" fill="#a3a3a3"/><rect x="53.8" y="135" width="4.9" height="4.9" fill="#b4b4b4"/><rect x="58.7" y="135" width="4.9" height="4.9" fill="#adadad"/><rect x="63.6" y="135" width="4.9" height="4.9" fill="#7b7b7b"/><rect x="68.5" y="135" width="4.9" height="4.9" fill="#999999"/><rect x="44" y="139.9" width="4.9" height="4.9" fill="#cccccc"/><rect x="48.9" y="139.9" width="4.9" height="4.9" fill="#9a9a9a"/><rect x="53.8" y="139.9" width="4.9" height="4.9" fill="#595959"/><rect x="58.7" y="139.9" width="4.9" height="4.9" fill="#a1a1a1"/><rect x="63.6" y="139.9" width="4.9" height="4.9" fill="#989898"/><rect x="68.5" y="139.9" width="4.9" height="4.9" fill="#a2a2a2"/><rect x="37.4" y="170" width="4.9" height="4.9" fill="#c2c2c2"/><rect x="42.3" y="170" width="4.9" height="4.9" fill="#b3b3b3"/><rect x="47.2" y="170" width="4.9" height="4.9" fill="#828282"/><rect x="52.1" y="170" width="4.9" height="4.9" fill="#919191"/><rect x="57" y="170" width="4.9" height="4.9" fill="#838383"/><rect x="61.9" y="170" width="4.9" height="4.9" fill="#959595"/><rect x="66.8" y="170" width="4.9" height="4.9" fill="#868686"/><rect x="71.7" y="170" width="4.9" height="4.9" fill="#b6b6b6"/><rect x="37.4" y="174.9" width="4.9" height="4.9" fill="#797979"/><rect x="42.3" y="174.9" width="4.9" height="4.9" fill="#8a8a8a"/><rect x="47.2" y="174.9" width="4.9" height="4.9" fill="#919191"/><rect x="52.1" y="174.9" width="4.9" height="4.9" fill="#a3a3a3"/><rect x="57" y="174.9" width="4.9" height="4.9" fill="#b0b0b0"/><rect x="61.9" y="174.9" width="4.9" height="4.9" fill="#969696"/><rect x="66.8" y="174.9" width="4.9" height="4.9" fill="#989898"/><rect x="71.7" y="174.9" width="4.9" height="4.9" fill="#afafaf"/></svg></div>
<div class="t" style="left:825px;top:421px">上传毕业照片<span lang="zh-TW">：</span></div>
<div class="abs" style="left:777px;top:437px;width:108px;height:17px;background:#ebebeb;border:1px solid #dfe3ea;border-radius:2px"></div>
<div class="btn" style="left:888px;top:438px;width:68px;height:16px;line-height:14px;font-size:13px;text-indent:-2px">浏览<span style="letter-spacing:3.2px">...</span></div>
<div class="btn" style="left:829px;top:457px;width:76px;height:22px;line-height:16px">提交照片</div>
<svg id="mz" class="abs" style="left:0;top:0;filter:blur(.5px)" width="962" height="725" viewBox="0 0 962 725"><rect x="50" y="34" width="5" height="5" fill="#e4ecdb"/><rect x="55" y="34" width="5" height="5" fill="#dbe2d2"/><rect x="60" y="34" width="5" height="5" fill="#e5eddc"/><rect x="65" y="34" width="5" height="5" fill="#d0d7c7"/><rect x="70" y="34" width="5" height="5" fill="#d8dfcf"/><rect x="75" y="34" width="5" height="5" fill="#c0c6b8"/><rect x="80" y="34" width="5" height="5" fill="#e0e7d6"/><rect x="50" y="39" width="5" height="5" fill="#cfd6c7"/><rect x="55" y="39" width="5" height="5" fill="#dbe2d2"/><rect x="60" y="39" width="5" height="5" fill="#c4cbbc"/><rect x="65" y="39" width="5" height="5" fill="#c2c9ba"/><rect x="70" y="39" width="5" height="5" fill="#a8aea1"/><rect x="75" y="39" width="5" height="5" fill="#969b90"/><rect x="80" y="39" width="5" height="5" fill="#dee5d4"/><rect x="50" y="44" width="5" height="5" fill="#bfc5b7"/><rect x="55" y="44" width="5" height="5" fill="#cfd6c7"/><rect x="60" y="44" width="5" height="5" fill="#d6ddcd"/><rect x="65" y="44" width="5" height="5" fill="#d5dccc"/><rect x="70" y="44" width="5" height="5" fill="#d9e0d0"/><rect x="75" y="44" width="5" height="5" fill="#d6ddcd"/><rect x="80" y="44" width="5" height="5" fill="#e4ecdb"/><rect x="112" y="34" width="5" height="5" fill="#e2e9d8"/><rect x="117" y="34" width="5" height="5" fill="#e4ecdb"/><rect x="112" y="39" width="5" height="5" fill="#dee5d4"/><rect x="117" y="39" width="5" height="5" fill="#d7dece"/><rect x="112" y="44" width="5" height="5" fill="#e3ebda"/><rect x="117" y="44" width="5" height="5" fill="#e8f0df"/><rect x="165" y="38" width="5" height="5" fill="#e5eddc"/><rect x="170" y="38" width="5" height="5" fill="#e2e9d8"/><rect x="165" y="43" width="5" height="5" fill="#e2e9d8"/><rect x="170" y="43" width="5" height="5" fill="#e3ebda"/><rect x="175" y="34" width="5" height="5" fill="#dbe2d2"/><rect x="180" y="34" width="5" height="5" fill="#c5ccbd"/><rect x="185" y="34" width="5" height="5" fill="#d5dccc"/><rect x="190" y="34" width="5" height="5" fill="#e1e8d7"/><rect x="195" y="34" width="5" height="5" fill="#d5dccc"/><rect x="200" y="34" width="5" height="5" fill="#e2ead9"/><rect x="205" y="34" width="5" height="5" fill="#d5dccc"/><rect x="210" y="34" width="5" height="5" fill="#dbe2d2"/><rect x="215" y="34" width="5" height="5" fill="#c5ccbd"/><rect x="220" y="34" width="5" height="5" fill="#dde4d4"/><rect x="225" y="34" width="5" height="5" fill="#e4ecdb"/><rect x="230" y="34" width="5" height="5" fill="#e1e8d7"/><rect x="235" y="34" width="5" height="5" fill="#dee5d4"/><rect x="240" y="34" width="5" height="5" fill="#d8dfcf"/><rect x="245" y="34" width="5" height="5" fill="#e1e8d7"/><rect x="250" y="34" width="5" height="5" fill="#d6ddcd"/><rect x="255" y="34" width="5" height="5" fill="#d8dfcf"/><rect x="175" y="39" width="5" height="5" fill="#e1e8d7"/><rect x="180" y="39" width="5" height="5" fill="#cad1c2"/><rect x="185" y="39" width="5" height="5" fill="#bcc2b4"/><rect x="190" y="39" width="5" height="5" fill="#d5dccc"/><rect x="195" y="39" width="5" height="5" fill="#c6cdbe"/><rect x="200" y="39" width="5" height="5" fill="#d4dbcb"/><rect x="205" y="39" width="5" height="5" fill="#cbd2c3"/><rect x="210" y="39" width="5" height="5" fill="#c6cdbe"/><rect x="215" y="39" width="5" height="5" fill="#e2ead9"/><rect x="220" y="39" width="5" height="5" fill="#c3cabb"/><rect x="225" y="39" width="5" height="5" fill="#d7dece"/><rect x="230" y="39" width="5" height="5" fill="#dee5d4"/><rect x="235" y="39" width="5" height="5" fill="#a3a99d"/><rect x="240" y="39" width="5" height="5" fill="#c3cabb"/><rect x="245" y="39" width="5" height="5" fill="#d6ddcd"/><rect x="250" y="39" width="5" height="5" fill="#c9d0c1"/><rect x="255" y="39" width="5" height="5" fill="#e4ecdb"/><rect x="175" y="44" width="5" height="5" fill="#cdd4c5"/><rect x="180" y="44" width="5" height="5" fill="#e3ebda"/><rect x="185" y="44" width="5" height="5" fill="#d6ddcd"/><rect x="190" y="44" width="5" height="5" fill="#dfe6d5"/><rect x="195" y="44" width="5" height="5" fill="#dae1d1"/><rect x="200" y="44" width="5" height="5" fill="#e4ecdb"/><rect x="205" y="44" width="5" height="5" fill="#e0e7d6"/><rect x="210" y="44" width="5" height="5" fill="#dfe6d5"/><rect x="215" y="44" width="5" height="5" fill="#c4cbbc"/><rect x="220" y="44" width="5" height="5" fill="#e6eedd"/><rect x="225" y="44" width="5" height="5" fill="#e5eddc"/><rect x="230" y="44" width="5" height="5" fill="#c5ccbd"/><rect x="235" y="44" width="5" height="5" fill="#dee5d4"/><rect x="240" y="44" width="5" height="5" fill="#e7efde"/><rect x="245" y="44" width="5" height="5" fill="#cbd2c3"/><rect x="250" y="44" width="5" height="5" fill="#e1e8d7"/><rect x="255" y="44" width="5" height="5" fill="#d6ddcd"/><rect x="289" y="249" width="75" height="4" fill="#f6f6f6"/><rect x="290" y="235" width="5" height="5" fill="#e8e8e8"/><rect x="295" y="235" width="5" height="5" fill="#eeeeee"/><rect x="300" y="235" width="5" height="5" fill="#ebebeb"/><rect x="305" y="235" width="5" height="5" fill="#eeeeee"/><rect x="310" y="235" width="5" height="5" fill="#f3f3f3"/><rect x="315" y="235" width="5" height="5" fill="#ededed"/><rect x="320" y="235" width="5" height="5" fill="#dbdbdb"/><rect x="325" y="235" width="5" height="5" fill="#ececec"/><rect x="330" y="235" width="5" height="5" fill="#e8e8e8"/><rect x="335" y="235" width="5" height="5" fill="#eaeaea"/><rect x="340" y="235" width="5" height="5" fill="#ebebeb"/><rect x="345" y="235" width="5" height="5" fill="#f0f0f0"/><rect x="350" y="235" width="5" height="5" fill="#e7e7e7"/><rect x="355" y="235" width="5" height="5" fill="#efefef"/><rect x="360" y="235" width="5" height="5" fill="#eaeaea"/><rect x="365" y="235" width="5" height="5" fill="#f1f1f1"/><rect x="370" y="235" width="5" height="5" fill="#f1f1f1"/><rect x="290" y="240" width="5" height="5" fill="#dfdfdf"/><rect x="295" y="240" width="5" height="5" fill="#e4e4e4"/><rect x="300" y="240" width="5" height="5" fill="#d9d9d9"/><rect x="305" y="240" width="5" height="5" fill="#dfdfdf"/><rect x="310" y="240" width="5" height="5" fill="#e3e3e3"/><rect x="315" y="240" width="5" height="5" fill="#d6d6d6"/><rect x="320" y="240" width="5" height="5" fill="#ebebeb"/><rect x="325" y="240" width="5" height="5" fill="#e7e7e7"/><rect x="330" y="240" width="5" height="5" fill="#e6e6e6"/><rect x="335" y="240" width="5" height="5" fill="#f1f1f1"/><rect x="340" y="240" width="5" height="5" fill="#e7e7e7"/><rect x="345" y="240" width="5" height="5" fill="#efefef"/><rect x="350" y="240" width="5" height="5" fill="#ebebeb"/><rect x="355" y="240" width="5" height="5" fill="#dadada"/><rect x="360" y="240" width="5" height="5" fill="#e2e2e2"/><rect x="365" y="240" width="5" height="5" fill="#d9d9d9"/><rect x="370" y="240" width="5" height="5" fill="#e9e9e9"/><rect x="290" y="245" width="5" height="5" fill="#d8d8d8"/><rect x="295" y="245" width="5" height="5" fill="#ebebeb"/><rect x="300" y="245" width="5" height="5" fill="#cfcfcf"/><rect x="305" y="245" width="5" height="5" fill="#cfcfcf"/><rect x="310" y="245" width="5" height="5" fill="#f3f3f3"/><rect x="315" y="245" width="5" height="5" fill="#e6e6e6"/><rect x="320" y="245" width="5" height="5" fill="#eaeaea"/><rect x="325" y="245" width="5" height="5" fill="#e9e9e9"/><rect x="330" y="245" width="5" height="5" fill="#e3e3e3"/><rect x="335" y="245" width="5" height="5" fill="#e6e6e6"/><rect x="340" y="245" width="5" height="5" fill="#d2d2d2"/><rect x="345" y="245" width="5" height="5" fill="#e9e9e9"/><rect x="350" y="245" width="5" height="5" fill="#f1f1f1"/><rect x="355" y="245" width="5" height="5" fill="#e4e4e4"/><rect x="360" y="245" width="5" height="5" fill="#ececec"/><rect x="365" y="245" width="5" height="5" fill="#e3e3e3"/><rect x="370" y="245" width="5" height="5" fill="#d1d1d1"/><rect x="285" y="267" width="48" height="4" fill="#f1f1f1"/><rect x="290" y="254" width="5" height="5" fill="#d3ceca"/><rect x="295" y="254" width="5" height="5" fill="#e1dcd8"/><rect x="300" y="254" width="5" height="5" fill="#ccc7c3"/><rect x="305" y="254" width="5" height="5" fill="#cfcac6"/><rect x="310" y="254" width="5" height="5" fill="#d4cfcb"/><rect x="315" y="254" width="5" height="5" fill="#cdc8c4"/><rect x="320" y="254" width="5" height="5" fill="#c6c2be"/><rect x="290" y="259" width="5" height="5" fill="#bab6b2"/><rect x="295" y="259" width="5" height="5" fill="#a29e9b"/><rect x="300" y="259" width="5" height="5" fill="#94918e"/><rect x="305" y="259" width="5" height="5" fill="#cac5c1"/><rect x="310" y="259" width="5" height="5" fill="#969390"/><rect x="315" y="259" width="5" height="5" fill="#aaa6a3"/><rect x="320" y="259" width="5" height="5" fill="#bdb9b5"/><rect x="290" y="264" width="5" height="5" fill="#cbc6c2"/><rect x="295" y="264" width="5" height="5" fill="#e0dbd7"/><rect x="300" y="264" width="5" height="5" fill="#cfcac6"/><rect x="305" y="264" width="5" height="5" fill="#c8c4c0"/><rect x="310" y="264" width="5" height="5" fill="#d1ccc8"/><rect x="315" y="264" width="5" height="5" fill="#cdc8c4"/><rect x="320" y="264" width="5" height="5" fill="#ded9d5"/><rect x="280" y="256" width="5" height="5" fill="#dfdfdf"/><rect x="285" y="256" width="5" height="5" fill="#e0e0e0"/><rect x="280" y="261" width="5" height="5" fill="#e4e4e4"/><rect x="285" y="261" width="5" height="5" fill="#e0e0e0"/><rect x="347" y="229.500" width="60" height="4" rx="2" fill="#9cc590"/><rect x="266" y="363" width="24" height="15" fill="#ececec"/><rect x="266" y="363" width="5" height="5" fill="#a8a8a8"/><rect x="271" y="363" width="5" height="5" fill="#9b9b9b"/><rect x="276" y="363" width="5" height="5" fill="#e5e5e5"/><rect x="266" y="368" width="5" height="5" fill="#cdcdcd"/><rect x="271" y="368" width="5" height="5" fill="#c6c6c6"/><rect x="276" y="368" width="5" height="5" fill="#bebebe"/><rect x="266" y="373" width="5" height="5" fill="#e1e1e1"/><rect x="271" y="373" width="5" height="5" fill="#dcdcdc"/><rect x="276" y="373" width="5" height="5" fill="#cdcdcd"/><rect x="281" y="352" width="10" height="26" fill="#eeeeee"/><rect x="290" y="369" width="140" height="6" fill="#fafafa"/><rect x="280" y="354.5" width="5" height="5" fill="#eee9ee"/><rect x="285" y="354.5" width="5" height="5" fill="#dbd6db"/><rect x="290" y="354.5" width="5" height="5" fill="#e6e1e6"/><rect x="295" y="354.5" width="5" height="5" fill="#e3dee3"/><rect x="300" y="354.5" width="5" height="5" fill="#e6e1e6"/><rect x="305" y="354.5" width="5" height="5" fill="#bfbbbf"/><rect x="310" y="354.5" width="5" height="5" fill="#d5d0d5"/><rect x="315" y="354.5" width="5" height="5" fill="#e3dee3"/><rect x="320" y="354.5" width="5" height="5" fill="#e6e1e6"/><rect x="325" y="354.5" width="5" height="5" fill="#cdc8cd"/><rect x="330" y="354.5" width="5" height="5" fill="#ddd8dd"/><rect x="335" y="354.5" width="5" height="5" fill="#ebe6eb"/><rect x="340" y="354.5" width="5" height="5" fill="#bfbbbf"/><rect x="345" y="354.5" width="5" height="5" fill="#dad5da"/><rect x="350" y="354.5" width="5" height="5" fill="#e8e3e8"/><rect x="355" y="354.5" width="5" height="5" fill="#f0ebf0"/><rect x="360" y="354.5" width="5" height="5" fill="#c1bdc1"/><rect x="365" y="354.5" width="5" height="5" fill="#ece7ec"/><rect x="370" y="354.5" width="5" height="5" fill="#e6e1e6"/><rect x="375" y="354.5" width="5" height="5" fill="#eae5ea"/><rect x="380" y="354.5" width="5" height="5" fill="#e7e2e7"/><rect x="385" y="354.5" width="5" height="5" fill="#eee9ee"/><rect x="390" y="354.5" width="5" height="5" fill="#dfdadf"/><rect x="395" y="354.5" width="5" height="5" fill="#eae5ea"/><rect x="400" y="354.5" width="5" height="5" fill="#dbd6db"/><rect x="405" y="354.5" width="5" height="5" fill="#d5d0d5"/><rect x="410" y="354.5" width="5" height="5" fill="#d8d3d8"/><rect x="415" y="354.5" width="5" height="5" fill="#ece7ec"/><rect x="280" y="359.5" width="5" height="5" fill="#c6c2c6"/><rect x="285" y="359.5" width="5" height="5" fill="#d2cdd2"/><rect x="290" y="359.5" width="5" height="5" fill="#bdb9bd"/><rect x="295" y="359.5" width="5" height="5" fill="#e0dbe0"/><rect x="300" y="359.5" width="5" height="5" fill="#d3ced3"/><rect x="305" y="359.5" width="5" height="5" fill="#d6d1d6"/><rect x="310" y="359.5" width="5" height="5" fill="#d9d4d9"/><rect x="315" y="359.5" width="5" height="5" fill="#918e91"/><rect x="320" y="359.5" width="5" height="5" fill="#c2bec2"/><rect x="325" y="359.5" width="5" height="5" fill="#b9b5b9"/><rect x="330" y="359.5" width="5" height="5" fill="#ded9de"/><rect x="335" y="359.5" width="5" height="5" fill="#c9c4c9"/><rect x="340" y="359.5" width="5" height="5" fill="#b8b4b8"/><rect x="345" y="359.5" width="5" height="5" fill="#e0dbe0"/><rect x="350" y="359.5" width="5" height="5" fill="#bbb7bb"/><rect x="355" y="359.5" width="5" height="5" fill="#c2bec2"/><rect x="360" y="359.5" width="5" height="5" fill="#e8e3e8"/><rect x="365" y="359.5" width="5" height="5" fill="#e1dce1"/><rect x="370" y="359.5" width="5" height="5" fill="#c6c2c6"/><rect x="375" y="359.5" width="5" height="5" fill="#d0cbd0"/><rect x="380" y="359.5" width="5" height="5" fill="#dbd6db"/><rect x="385" y="359.5" width="5" height="5" fill="#e7e2e7"/><rect x="390" y="359.5" width="5" height="5" fill="#dbd6db"/><rect x="395" y="359.5" width="5" height="5" fill="#d7d2d7"/><rect x="400" y="359.5" width="5" height="5" fill="#ccc7cc"/><rect x="405" y="359.5" width="5" height="5" fill="#9d999d"/><rect x="410" y="359.5" width="5" height="5" fill="#d8d3d8"/><rect x="415" y="359.5" width="5" height="5" fill="#cdc8cd"/><rect x="280" y="364.5" width="5" height="5" fill="#bfbbbf"/><rect x="285" y="364.5" width="5" height="5" fill="#d4cfd4"/><rect x="290" y="364.5" width="5" height="5" fill="#e6e1e6"/><rect x="295" y="364.5" width="5" height="5" fill="#ddd8dd"/><rect x="300" y="364.5" width="5" height="5" fill="#ddd8dd"/><rect x="305" y="364.5" width="5" height="5" fill="#d5d0d5"/><rect x="310" y="364.5" width="5" height="5" fill="#d6d1d6"/><rect x="315" y="364.5" width="5" height="5" fill="#e8e3e8"/><rect x="320" y="364.5" width="5" height="5" fill="#e4dfe4"/><rect x="325" y="364.5" width="5" height="5" fill="#d8d3d8"/><rect x="330" y="364.5" width="5" height="5" fill="#e4dfe4"/><rect x="335" y="364.5" width="5" height="5" fill="#eee9ee"/><rect x="340" y="364.5" width="5" height="5" fill="#e3dee3"/><rect x="345" y="364.5" width="5" height="5" fill="#ede8ed"/><rect x="350" y="364.5" width="5" height="5" fill="#ddd8dd"/><rect x="355" y="364.5" width="5" height="5" fill="#ded9de"/><rect x="360" y="364.5" width="5" height="5" fill="#d4cfd4"/><rect x="365" y="364.5" width="5" height="5" fill="#c6c2c6"/><rect x="370" y="364.5" width="5" height="5" fill="#d2cdd2"/><rect x="375" y="364.5" width="5" height="5" fill="#efeaef"/><rect x="380" y="364.5" width="5" height="5" fill="#e6e1e6"/><rect x="385" y="364.5" width="5" height="5" fill="#ded9de"/><rect x="390" y="364.5" width="5" height="5" fill="#e1dce1"/><rect x="395" y="364.5" width="5" height="5" fill="#d4cfd4"/><rect x="400" y="364.5" width="5" height="5" fill="#d1ccd1"/><rect x="405" y="364.5" width="5" height="5" fill="#c8c4c8"/><rect x="410" y="364.5" width="5" height="5" fill="#d6d1d6"/><rect x="415" y="364.5" width="5" height="5" fill="#e0dbe0"/><rect x="840" y="415" width="38" height="9" fill="#fff" fill-opacity=".65"/><rect x="288" y="604" width="98" height="7" fill="#fbfbfb"/><rect x="287" y="590" width="8" height="18" fill="#f4f4f4"/><rect x="295" y="594" width="5" height="5" fill="#b8b4b6"/><rect x="300" y="594" width="5" height="5" fill="#afabad"/><rect x="305" y="594" width="5" height="5" fill="#d4cfd1"/><rect x="310" y="594" width="5" height="5" fill="#b7b3b5"/><rect x="315" y="594" width="5" height="5" fill="#d1ccce"/><rect x="320" y="594" width="5" height="5" fill="#dfdadc"/><rect x="325" y="594" width="5" height="5" fill="#bfbbbd"/><rect x="330" y="594" width="5" height="5" fill="#d7d2d4"/><rect x="335" y="594" width="5" height="5" fill="#c2bec0"/><rect x="340" y="594" width="5" height="5" fill="#d8d3d5"/><rect x="345" y="594" width="5" height="5" fill="#d3ced0"/><rect x="350" y="594" width="5" height="5" fill="#d2cdcf"/><rect x="355" y="594" width="5" height="5" fill="#e0dbdd"/><rect x="360" y="594" width="5" height="5" fill="#aca8aa"/><rect x="365" y="594" width="5" height="5" fill="#cec9cb"/><rect x="295" y="599" width="5" height="5" fill="#b5b1b3"/><rect x="300" y="599" width="5" height="5" fill="#888586"/><rect x="305" y="599" width="5" height="5" fill="#b5b1b3"/><rect x="310" y="599" width="5" height="5" fill="#aca8aa"/><rect x="315" y="599" width="5" height="5" fill="#e5e0e2"/><rect x="320" y="599" width="5" height="5" fill="#dad5d7"/><rect x="325" y="599" width="5" height="5" fill="#c5c1c3"/><rect x="330" y="599" width="5" height="5" fill="#e2dddf"/><rect x="335" y="599" width="5" height="5" fill="#e4dfe1"/><rect x="340" y="599" width="5" height="5" fill="#c7c3c5"/><rect x="345" y="599" width="5" height="5" fill="#b6b2b4"/><rect x="350" y="599" width="5" height="5" fill="#8c898a"/><rect x="355" y="599" width="5" height="5" fill="#e1dcde"/><rect x="360" y="599" width="5" height="5" fill="#e2dddf"/><rect x="365" y="599" width="5" height="5" fill="#cdc8ca"/></svg>
<!-- bottom -->
<div class="dots" style="top:697px;left:226px;width:733px"></div>
<div class="btn" style="left:472px;top:699px;width:56px;height:22px;line-height:15px">下一步</div>
<div class="btn" style="left:534px;top:699px;width:58px;height:22px;line-height:15px;white-space:pre;word-spacing:3px">重  置</div>
<div class="btn dis" style="left:598px;top:699px;width:115px;height:22px;line-height:15px">取消毕业申请</div>
<div class="abs" style="left:0;top:721px;width:962px;height:4px;background:#f0eeee;border-top:1px solid #8e8e8e"></div>


</body>
</html>
